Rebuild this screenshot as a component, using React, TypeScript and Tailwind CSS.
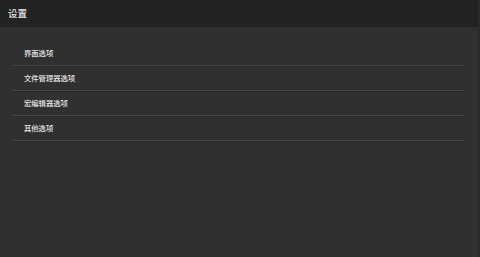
const items = ["界面选项", "文件管理器选项", "宏编辑器选项", "其他选项"];

export default function App() {
  return (
    <div
      className="flex h-[257px] w-[480px] flex-col bg-[#303030] text-[#e4e4e4]"
      style={{ fontFamily: '"Noto Sans CJK SC", "Noto Sans", sans-serif' }}
    >
      <header className="flex h-[27px] items-center border-r-2 border-[#2a2a2a] bg-[#222222] pl-[8px] text-[9.5px] font-medium">
        设置
      </header>
      <main className="flex-1 border-r-2 border-[#2a2a2a] pl-[13px] pr-[13px] pt-[14px]">
        <ul>
          {items.map((item) => (
            <li
              key={item}
              className="flex h-[25px] items-center border-b border-[#474747] pl-[11px] text-[7.3px] font-medium shadow-[0_1px_0_#2a2a2a]"
            >
              {item}
            </li>
          ))}
        </ul>
      </main>
    </div>
  );
}
